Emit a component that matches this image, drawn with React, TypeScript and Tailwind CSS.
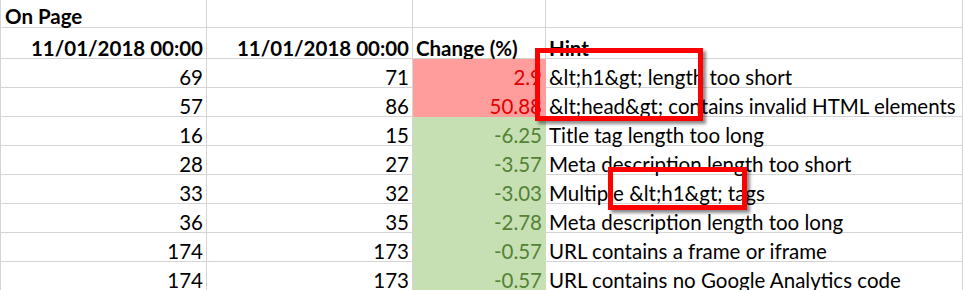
const rows = [
  { a: "69", b: "71", c: "2.9", up: true, hint: "&lt;h1&gt; length too short" },
  { a: "57", b: "86", c: "50.88", up: true, hint: "&lt;head&gt; contains invalid HTML elements" },
  { a: "16", b: "15", c: "-6.25", up: false, hint: "Title tag length too long" },
  { a: "28", b: "27", c: "-3.57", up: false, hint: "Meta description length too short" },
  { a: "33", b: "32", c: "-3.03", up: false, hint: "Multiple &lt;h1&gt; tags" },
  { a: "36", b: "35", c: "-2.78", up: false, hint: "Meta description length too long" },
  { a: "174", b: "173", c: "-0.57", up: false, hint: "URL contains a frame or iframe" },
  { a: "174", b: "173", c: "-0.57", up: false, hint: "URL contains no Google Analytics code" },
];

const cell = "flex items-end leading-5 border-b border-r border-[#d4d4d4] whitespace-nowrap";

export default function App() {
  return (
    <div
      className="relative w-[963px] h-[290px] overflow-hidden bg-white text-[20.5px] text-black"
      style={{ fontFamily: "Lato, 'Liberation Sans', sans-serif" }}
    >
      <div className="grid grid-cols-[207px_206px_133px_1fr]">
        {/* title row */}
        <div className={`${cell} border-l h-[28px] pl-[4px] pb-[1px] font-bold`}>On Page</div>
        <div className={`${cell} h-[28px]`} />
        <div className={`${cell} h-[28px]`} />
        <div className={`${cell} h-[28px]`} />

        {/* header row */}
        <div className={`${cell} border-l h-[31px] justify-end pr-[3px] font-bold`}>11/01/2018 00:00</div>
        <div className={`${cell} h-[31px] justify-end pr-[3px] font-bold`}>11/01/2018 00:00</div>
        <div className={`${cell} h-[31px] pl-[3px] font-bold`}>Change (%)</div>
        <div className={`${cell} h-[31px] pl-[3px] font-bold`}>Hint</div>

        {rows.map((r, i) => (
          <div key={i} className="contents">
            <div className={`${cell} border-l h-[29px] justify-end pr-[3px]`}>{r.a}</div>
            <div className={`${cell} h-[29px] justify-end pr-[3px]`}>{r.b}</div>
            <div
              className={
                r.up
                  ? "flex items-end leading-5 h-[29px] justify-end pr-[3px] bg-[#ff9c9c] text-[#e00000] border-b border-r border-[#ff9c9c]"
                  : "flex items-end leading-5 h-[29px] justify-end pr-[3px] bg-[#c6e0b4] text-[#548235] border-b border-r border-[#c6e0b4]"
              }
            >
              {r.c}
            </div>
            <div className={`${cell} h-[29px] pl-[3px]`}>{r.hint}</div>
          </div>
        ))}
      </div>

      {/* annotation boxes */}
      <div className="absolute left-[535px] top-[48px] w-[168px] h-[73px] border-[5px] border-[#ff0000] shadow-[3px_3px_3px_rgba(0,0,0,0.45)]" />
      <div className="absolute left-[608px] top-[167px] w-[139px] h-[43px] border-[5px] border-[#ff0000] shadow-[3px_3px_3px_rgba(0,0,0,0.45)]" />
    </div>
  );
}
